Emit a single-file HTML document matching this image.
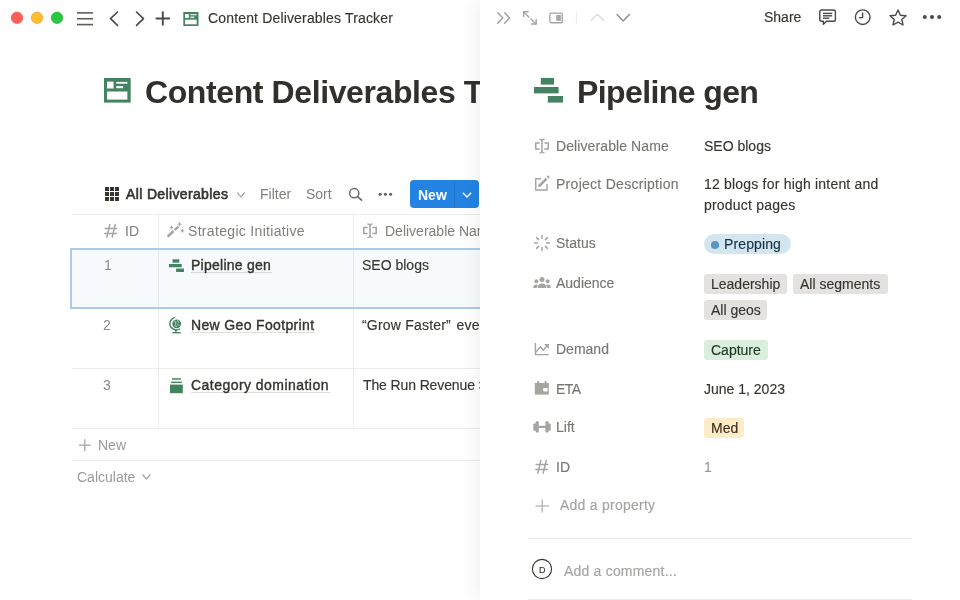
<!DOCTYPE html>
<html>
<head>
<meta charset="utf-8">
<style>
html,body{margin:0;padding:0;background:#fff;width:960px;height:600px;overflow:hidden;}
body{font-family:"Liberation Sans",sans-serif;color:#37352f;position:relative;}
.t{position:absolute;white-space:nowrap;font-size:14px;line-height:20px;will-change:transform;-webkit-text-stroke-width:0.15px;}
.g{color:#787773;}
.g2{color:#7f7e7a;-webkit-text-stroke-width:0;}
.abs{position:absolute;}
svg{position:absolute;overflow:visible;}
#left{position:absolute;left:0;top:0;width:960px;height:600px;overflow:hidden;}
#panel{position:absolute;left:480px;top:0;width:480px;height:600px;background:#fff;box-shadow:-5px 0 16px rgba(15,15,15,0.055);}
.hl{position:absolute;height:1px;background:#ececea;}
.vl{position:absolute;width:1px;background:#ececea;}
.b{font-weight:700;-webkit-text-stroke-width:0;}
.ul{}
.md{-webkit-text-stroke:0.4px #37352f;}
.uline{position:absolute;height:1px;background:rgba(55,53,47,0.16);}
.tag{position:absolute;height:19.5px;border-radius:3px;background:#e3e2e0;}
</style>
</head>
<body>
<div id="left">
  <!-- traffic lights -->
  <svg style="left:0;top:0" width="80" height="36">
    <circle cx="17" cy="17.8" r="5.75" fill="#ff5f57" stroke="#e2463f" stroke-width="0.6"/>
    <circle cx="37" cy="17.8" r="5.75" fill="#febc2e" stroke="#dea123" stroke-width="0.6"/>
    <circle cx="57" cy="17.8" r="5.75" fill="#28c840" stroke="#1aab29" stroke-width="0.6"/>
  </svg>
  <!-- hamburger -->
  <svg style="left:0;top:0" width="100" height="36">
    <g stroke="#5f5e5b" stroke-width="1.6" stroke-linecap="butt">
      <line x1="77" y1="12.9" x2="93" y2="12.9"/>
      <line x1="77" y1="18.75" x2="93" y2="18.75"/>
      <line x1="77" y1="24.6" x2="93" y2="24.6"/>
    </g>
  </svg>
  <!-- nav chevrons + plus -->
  <svg style="left:0;top:0" width="200" height="36">
    <g stroke="#4a4945" stroke-width="1.6" fill="none" stroke-linecap="round" stroke-linejoin="round">
      <polyline points="117.5,12 110.5,18.7 117.5,25.4"/>
      <polyline points="136.5,12 143.5,18.7 136.5,25.4"/>
      <line x1="162.8" y1="12.2" x2="162.8" y2="24.8" stroke-width="1.9"/>
      <line x1="156.4" y1="18.5" x2="169.2" y2="18.5" stroke-width="1.9"/>
    </g>
  </svg>
  <!-- small page icon -->
  <svg style="left:183px;top:12px" width="16" height="14" viewBox="0 0 27 24.6">
    <rect x="0" y="0" width="26.7" height="24.6" fill="#448361"/>
    <rect x="3" y="3.6" width="6.6" height="6.9" fill="#fff"/>
    <rect x="12.3" y="3.9" width="11.1" height="1.8" fill="#fff"/>
    <rect x="12.3" y="8.1" width="6.9" height="2.1" fill="#fff"/>
    <rect x="3" y="13.5" width="20.4" height="8.1" fill="#fff"/>
  </svg>
  <div class="t" style="left:207.5px;top:8.35px;letter-spacing:0.16px">Content Deliverables Tracker</div>

  <!-- page icon big -->
  <svg style="left:103.7px;top:78.3px" width="26.7" height="24.6" viewBox="0 0 26.7 24.6">
    <rect x="0" y="0" width="26.7" height="24.6" fill="#448361"/>
    <rect x="3" y="3.6" width="6.6" height="6.9" fill="#fff"/>
    <rect x="12.3" y="3.9" width="11.1" height="1.8" fill="#fff"/>
    <rect x="12.3" y="8.1" width="6.9" height="2.1" fill="#fff"/>
    <rect x="3" y="13.5" width="20.4" height="8.1" fill="#fff"/>
  </svg>
  <div class="t b" style="left:144.9px;top:71.6px;font-size:32px;line-height:40px;letter-spacing:-0.4px;color:#32302c">Content Deliverables Tracker</div>

  <!-- toolbar -->
  <svg style="left:0;top:0" width="130" height="210">
    <g fill="#37352f">
      <rect x="105" y="187" width="4" height="4"/><rect x="110" y="187" width="4" height="4"/><rect x="115" y="187" width="4" height="4"/>
      <rect x="105" y="192" width="4" height="4"/><rect x="110" y="192" width="4" height="4"/><rect x="115" y="192" width="4" height="4"/>
      <rect x="105" y="197" width="4" height="4"/><rect x="110" y="197" width="4" height="4"/><rect x="115" y="197" width="4" height="4"/>
    </g>
  </svg>
  <div class="t" style="left:126.3px;top:183.95px;letter-spacing:0.36px;-webkit-text-stroke:0.6px #37352f">All Deliverables</div>
  <svg style="left:0;top:0" width="480" height="220">
    <polyline points="237.3,192.5 241,196.8 244.8,192.5" fill="none" stroke="#a5a4a1" stroke-width="1.2"/>
    <circle cx="354.2" cy="193.2" r="4.6" fill="none" stroke="#6b6a66" stroke-width="1.5"/>
    <line x1="357.6" y1="196.6" x2="361.6" y2="200.2" stroke="#6b6a66" stroke-width="1.6" stroke-linecap="round"/>
    <circle cx="380.2" cy="194.3" r="1.5" fill="#5f5e5b"/>
    <circle cx="385.4" cy="194.3" r="1.5" fill="#5f5e5b"/>
    <circle cx="390.6" cy="194.3" r="1.5" fill="#5f5e5b"/>
  </svg>
  <div class="t g2" style="left:259.7px;top:184.15px">Filter</div>
  <div class="t g2" style="left:306.2px;top:184.15px">Sort</div>
  <div class="abs" style="left:410px;top:180.3px;width:69px;height:27.5px;background:#2383e2;border-radius:4px"></div>
  <div class="abs" style="left:454px;top:180.3px;width:1px;height:27.5px;background:rgba(0,0,0,0.08)"></div>
  <div class="t b" style="left:417.5px;top:184.9px;color:#fff">New</div>
  <svg style="left:0;top:0" width="480" height="220">
    <polyline points="462.8,192.7 467,197 471.2,192.7" fill="none" stroke="#fff" stroke-width="1.5"/>
  </svg>

  <!-- table -->
  <div class="hl" style="left:71.5px;top:214px;width:900px"></div>
  <div class="vl" style="left:158px;top:215px;height:214px"></div>
  <div class="vl" style="left:353px;top:215px;height:214px"></div>
  <!-- header -->
  <svg style="left:99px;top:219px" width="24" height="24"><path d="M10.8 5.6 L7.8 18.2 M16.2 5.6 L13.2 18.2 M6.2 9.4 H17.6 M5.8 14.4 H17.2" fill="none" stroke="#a5a4a1" stroke-width="1.5" stroke-linecap="round"/></svg>
  <div class="t g2" style="left:124.6px;top:220.75px">ID</div>
  <svg style="left:163px;top:218px" width="24" height="24">
    <g stroke="#a5a4a1" stroke-width="2.5"><line x1="4.6" y1="18.6" x2="10.6" y2="13"/><line x1="11.6" y1="12.1" x2="15.4" y2="8.6"/></g>
    <path d="M8.4 7.0 L8.950000000000001 8.85 L10.8 9.4 L8.950000000000001 9.950000000000001 L8.4 11.8 L7.8500000000000005 9.950000000000001 L6.0 9.4 L7.8500000000000005 8.85 Z M16.6 3.2 L17.25 5.55 L19.6 6.2 L17.25 6.8500000000000005 L16.6 9.2 L15.950000000000001 6.8500000000000005 L13.600000000000001 6.2 L15.950000000000001 5.55 Z M19.4 10.4 L20.15 12.05 L21.799999999999997 12.8 L20.15 13.55 L19.4 15.200000000000001 L18.65 13.55 L17.0 12.8 L18.65 12.05 Z" fill="#a5a4a1"/>
  </svg>
  <div class="t g2" style="left:188.4px;top:221px;letter-spacing:0.32px">Strategic Initiative</div>
  <svg style="left:358px;top:218px" width="24" height="24"><g fill="none" stroke="#a5a4a1" stroke-width="1.5"><path d="M9.6 9.6 H5.8 V15.6 H9.6 M14.4 9.6 H18.2 V15.6 H14.4 M12 7 V18.6"/><path d="M9.4 5.9 Q12 6.2 12 8 Q12 6.2 14.6 5.9 M9.4 19.7 Q12 19.4 12 17.6 Q12 19.4 14.6 19.7" stroke-width="1.2"/></g></svg>
  <div class="t g2" style="left:384.7px;top:221px">Deliverable Name</div>

  <!-- row 1 selected -->
  <div class="abs" style="left:69.8px;top:248px;width:420px;height:61px;background:#f7fafd;box-sizing:border-box;border:2px solid #abcbec;border-right:none"></div>
  <div class="vl" style="left:158px;top:250px;height:57px;background:#e3e8ee"></div>
  <div class="vl" style="left:353px;top:250px;height:57px;background:#e3e8ee"></div>
  <div class="t g2" style="left:104.1px;top:255.35px;color:#8c8b87">1</div>
  <svg style="left:168.8px;top:259.2px" width="15" height="13.3" viewBox="0 0 29.1 24.6">
    <rect x="6.8" y="0" width="13.2" height="6.6" fill="#448361"/>
    <rect x="0" y="9" width="24.6" height="6.4" fill="#448361"/>
    <rect x="13.8" y="18" width="15.3" height="6.6" fill="#448361"/>
  </svg>
  <div class="t md" style="left:190.8px;top:255.15px;letter-spacing:0.25px">Pipeline gen</div>
  <div class="uline" style="left:191px;top:272px;width:80.5px"></div>
  <div class="t" style="left:362px;top:255.05px">SEO blogs</div>

  <!-- row 2 -->
  <div class="hl" style="left:71.5px;top:367.6px;width:900px"></div>
  <div class="t g2" style="left:103.1px;top:315.45px;color:#8c8b87">2</div>
  <svg style="left:164px;top:314px" width="24" height="24" viewBox="0 0 24 24">
    <circle cx="12.7" cy="9.8" r="4.4" fill="#448361"/>
    <g fill="none" stroke="#cfe6d8" stroke-width="0.9" stroke-linecap="round">
      <path d="M10.4 7.2 L12 8.4 L11.6 10.2"/>
      <path d="M13.6 6.6 L14.4 8.2"/>
      <path d="M13.8 10.2 L15.2 11.6"/>
      <path d="M10.6 11.8 L12.8 12.4"/>
    </g>
    <g fill="none" stroke="#448361" stroke-width="1.4" stroke-linecap="round">
      <path d="M10.2 3.6 C5.6 5.4 4.4 11.6 8.2 14.4 C10.2 16 13.4 16.2 15.6 15"/>
      <line x1="11.9" y1="15.6" x2="11.9" y2="18.2"/>
      <line x1="8.4" y1="18.7" x2="16.6" y2="18.7" stroke-linecap="butt"/>
    </g>
  </svg>
  <div class="t md" style="left:190.8px;top:315.45px;letter-spacing:0.35px">New Geo Footprint</div>
  <div class="uline" style="left:191px;top:332px;width:124px"></div>
  <div class="t" style="left:362.2px;top:315.45px;letter-spacing:0.2px">“Grow Faster” <span style="margin-left:1.5px">events</span></div>

  <!-- row 3 -->
  <div class="t g2" style="left:103.1px;top:375.15px;color:#8c8b87">3</div>
  <svg style="left:164px;top:374px" width="24" height="24" viewBox="0 0 24 24">
    <rect x="8" y="4.2" width="8.8" height="1.5" fill="#448361"/>
    <rect x="7.2" y="7.6" width="10.6" height="1.5" fill="#448361"/>
    <rect x="6" y="10.6" width="12.8" height="8.6" fill="#448361"/>
  </svg>
  <div class="t md" style="left:190.8px;top:375.15px;letter-spacing:0.46px">Category domination</div>
  <div class="uline" style="left:191px;top:392px;width:138.5px"></div>
  <div class="t" style="left:362.5px;top:375.15px;letter-spacing:-0.12px">The Run Revenue Summit</div>

  <div class="hl" style="left:71.5px;top:428px;width:900px"></div>
  <svg style="left:0;top:0" width="200" height="500">
    <g stroke="#a5a4a1" stroke-width="1.3">
      <line x1="84.8" y1="439.3" x2="84.8" y2="451"/>
      <line x1="79" y1="445.2" x2="90.6" y2="445.2"/>
    </g>
    <polyline points="142.4,474.5 146.4,478.8 150.4,474.5" fill="none" stroke="#a5a4a1" stroke-width="1.2"/>
  </svg>
  <div class="t g2" style="left:97.6px;top:434.95px;color:#9b9a97">New</div>
  <div class="hl" style="left:71.5px;top:460px;width:900px"></div>
  <div class="t g2" style="left:76.9px;top:466.75px;color:#9b9a97">Calculate</div>
</div>

<div id="panel">
  <!-- header icons (coords relative to panel: subtract 480) -->
  <svg style="left:0;top:0" width="480" height="36">
    <g fill="none" stroke="#a5a4a1" stroke-width="1.5" stroke-linecap="round" stroke-linejoin="round">
      <polyline points="17.8,12.8 22.8,18 17.8,23.2"/>
      <polyline points="24.6,12.8 29.6,18 24.6,23.2"/>
    </g>
    <g fill="none" stroke="#a5a4a1" stroke-width="1.4" stroke-linecap="round" stroke-linejoin="round">
      <line x1="43.8" y1="12" x2="48.8" y2="17"/>
      <polyline points="43.6,16.4 43.6,11.8 48.2,11.8"/>
      <line x1="51" y1="19" x2="56" y2="24"/>
      <polyline points="56.2,19.4 56.2,24 51.6,24"/>
    </g>
    <rect x="69.9" y="13.15" width="12.35" height="9.6" rx="1.2" fill="none" stroke="#a5a4a1" stroke-width="1.3"/>
    <rect x="76.3" y="14.9" width="4.5" height="5.9" fill="#a5a4a1"/>
    <line x1="96.4" y1="11" x2="96.4" y2="24.3" stroke="#ebebea" stroke-width="1"/>
    <polyline points="111.2,20.6 117.4,14.2 123.6,20.6" fill="none" stroke="#dedddb" stroke-width="1.5" stroke-linecap="round" stroke-linejoin="round"/>
    <polyline points="137,14.6 143.2,21 149.4,14.6" fill="none" stroke="#8f8e8b" stroke-width="1.5" stroke-linecap="round" stroke-linejoin="round"/>
  </svg>
  <div class="t" style="left:284.2px;top:7.35px">Share</div>
  <svg style="left:0;top:0" width="480" height="36">
    <g fill="none" stroke="#4a4945" stroke-width="1.4" stroke-linejoin="round">
      <path d="M341.6 10 H353.6 Q355.4 10 355.4 11.8 V19.4 Q355.4 21.2 353.6 21.2 H346.6 L343.4 24.2 V21.2 H341.6 Q339.8 21.2 339.8 19.4 V11.8 Q339.8 10 341.6 10 Z"/>
      <line x1="343" y1="13.4" x2="352.2" y2="13.4"/>
      <line x1="343" y1="15.8" x2="352.2" y2="15.8"/>
      <line x1="343" y1="18.2" x2="349.4" y2="18.2"/>
      <circle cx="382.7" cy="17.2" r="7.3"/>
      <polyline points="382.6,12.6 382.6,17.6 378.8,17.6"/>
      <path d="M418 10 L420.4 15.2 L426 15.8 L421.8 19.6 L423 25 L418 22.2 L413 25 L414.2 19.6 L410 15.8 L415.6 15.2 Z"/>
    </g>
    <circle cx="444.8" cy="17" r="2" fill="#4a4945"/>
    <circle cx="452" cy="17" r="2" fill="#4a4945"/>
    <circle cx="459.2" cy="17" r="2" fill="#4a4945"/>
  </svg>

  <!-- title icon -->
  <svg style="left:54.3px;top:78.3px" width="29.1" height="24.6" viewBox="0 0 29.1 24.6">
    <rect x="6.8" y="0" width="13.2" height="6.6" fill="#448361"/>
    <rect x="0" y="9" width="24.6" height="6.4" fill="#448361"/>
    <rect x="13.8" y="18" width="15.3" height="6.6" fill="#448361"/>
  </svg>
  <div class="t b" style="left:96.8px;top:71.5px;font-size:32px;line-height:40px;letter-spacing:-0.6px;color:#32302c">Pipeline gen</div>

  <!-- property icons -->
  <svg style="left:0;top:0" width="480" height="600">
    <g fill="none" stroke="#a5a4a1" stroke-width="1.4">
      <path d="M61 178.75 H55.75 V190.05 H67.05 V184"/>
    </g>
    <g transform="translate(50,133.3)"><g fill="none" stroke="#a5a4a1" stroke-width="1.5"><path d="M9.6 9.6 H5.8 V15.6 H9.6 M14.4 9.6 H18.2 V15.6 H14.4 M12 7 V18.6"/><path d="M9.4 5.9 Q12 6.2 12 8 Q12 6.2 14.6 5.9 M9.4 19.7 Q12 19.4 12 17.6 Q12 19.4 14.6 19.7" stroke-width="1.2"/></g></g>
    <line x1="59.2" y1="186" x2="66.6" y2="178.6" stroke="#a5a4a1" stroke-width="2.6"/>
    <path d="M58.2 187 L58.9 184.3 L60.9 186.3 Z" fill="#a5a4a1"/>
    <line x1="67.5" y1="177.7" x2="69" y2="176.2" stroke="#a5a4a1" stroke-width="2.6"/>
    <!-- status spinner -->
    <g stroke="#a5a4a1" stroke-width="1.5" stroke-linecap="round">
      <line x1="62" y1="235.4" x2="62" y2="238.2"/>
      <line x1="62" y1="247.6" x2="62" y2="250.4"/>
      <line x1="54.4" y1="243" x2="57.2" y2="243"/>
      <line x1="66.8" y1="243" x2="69.6" y2="243"/>
      <line x1="56.6" y1="237.6" x2="58.6" y2="239.6"/>
      <line x1="65.4" y1="246.4" x2="67.4" y2="248.4"/>
      <line x1="56.6" y1="248.4" x2="58.6" y2="246.4"/>
      <line x1="65.4" y1="239.6" x2="67.4" y2="237.6"/>
    </g>
    <!-- audience -->
    <g fill="#a5a4a1">
      <circle cx="62" cy="279.6" r="2.5"/>
      <circle cx="56.4" cy="281.2" r="2"/>
      <circle cx="67.6" cy="281.2" r="2"/>
      <path d="M57.6 288 Q57.6 283.4 62 283.4 Q66.4 283.4 66.4 288 Z"/>
      <path d="M53.2 288 Q53.2 284.4 56.4 284.4 Q57.6 284.4 58.2 285 Q56.8 286.2 56.8 288 Z"/>
      <path d="M70.8 288 Q70.8 284.4 67.6 284.4 Q66.4 284.4 65.8 285 Q67.2 286.2 67.2 288 Z"/>
    </g>
    <!-- demand -->
    <g fill="none" stroke="#a5a4a1" stroke-width="1.4" stroke-linejoin="round">
      <polyline points="55.4,343 55.4,354.6 68.8,354.6"/>
      <polyline points="55.6,352.6 60.4,346.6 63.2,350.2 67.6,345.2"/>
    </g>
    <path d="M64 344 L68.9 344 L68.9 348.9 Z" fill="#a5a4a1"/>
    <!-- ETA calendar -->
    <rect x="54.8" y="383" width="14" height="11.6" fill="#a5a4a1"/>
    <rect x="57.3" y="381" width="1.8" height="3" fill="#a5a4a1"/>
    <rect x="64.7" y="381" width="1.8" height="3" fill="#a5a4a1"/>
    <rect x="63.2" y="388" width="4.4" height="3.4" rx="0.6" fill="#fff"/>
    <!-- lift dumbbell -->
    <g fill="#a5a4a1">
      <rect x="53.3" y="423.6" width="2.8" height="7.2" rx="1"/>
      <rect x="55.6" y="421.2" width="3.2" height="11.2" rx="1"/>
      <rect x="58.4" y="425.8" width="7.4" height="2.2"/>
      <rect x="65.4" y="421.2" width="3.2" height="11.2" rx="1"/>
      <rect x="67.9" y="423.6" width="2.8" height="7.2" rx="1"/>
    </g>
    <!-- ID hash -->
    <g transform="translate(50,455)"><path d="M10.8 5.6 L7.8 18.2 M16.2 5.6 L13.2 18.2 M6.2 9.4 H17.6 M5.8 14.4 H17.2" fill="none" stroke="#a5a4a1" stroke-width="1.5" stroke-linecap="round"/></g>
    <!-- add property plus -->
    <g stroke="#b4b3b0" stroke-width="1.3">
      <line x1="62.2" y1="499.5" x2="62.2" y2="512.5"/>
      <line x1="55.5" y1="506" x2="69" y2="506"/>
    </g>
    <!-- avatar -->
    <circle cx="62" cy="569" r="9.6" fill="#fff" stroke="#37352f" stroke-width="1.1"/>
  </svg>

  <div class="t g" style="left:76.2px;top:135.75px;letter-spacing:0.1px">Deliverable Name</div>
  <div class="t g" style="left:76.2px;top:173.85px;letter-spacing:0.28px">Project Description</div>
  <div class="t g" style="left:76.2px;top:233.05px">Status</div>
  <div class="t g" style="left:76.2px;top:273.05px">Audience</div>
  <div class="t g" style="left:76.2px;top:339.15px">Demand</div>
  <div class="t g" style="left:76.2px;top:378.9px;letter-spacing:-0.5px">ETA</div>
  <div class="t g" style="left:76.2px;top:416.85px">Lift</div>
  <div class="t g" style="left:76.2px;top:456.85px">ID</div>
  <div class="t" style="left:79.75px;top:495.15px;color:#a5a4a1;letter-spacing:0.25px">Add a property</div>

  <div class="t" style="left:224.3px;top:135.95px">SEO blogs</div>
  <div class="t" style="left:224.3px;top:173.9px;letter-spacing:0.2px">12 blogs for high intent and</div>
  <div class="t" style="left:224.3px;top:194.95px;letter-spacing:0.2px">product pages</div>

  <div class="abs" style="left:223.9px;top:234.3px;width:86.9px;height:19.4px;border-radius:10px;background:#d3e5ef"></div>
  <div class="abs" style="left:231.2px;top:241.4px;width:7.6px;height:7.6px;border-radius:50%;background:#5b97bd"></div>
  <div class="t" style="left:243.6px;top:234.05px;color:#183347;letter-spacing:0.12px">Prepping</div>

  <div class="tag" style="left:223.9px;top:274.3px;width:82.7px"></div>
  <div class="tag" style="left:313.1px;top:274.3px;width:94.6px"></div>
  <div class="tag" style="left:223.9px;top:300.1px;width:62.9px"></div>
  <div class="t" style="left:230.6px;top:274.05px">Leadership</div>
  <div class="t" style="left:320.2px;top:274.05px">All segments</div>
  <div class="t" style="left:230.6px;top:299.85px">All geos</div>

  <div class="tag" style="left:223.9px;top:340px;width:64px;background:#dbeddb"></div>
  <div class="t" style="left:230.6px;top:339.75px;color:#1c3829">Capture</div>

  <div class="t" style="left:224.3px;top:378.65px">June 1, 2023</div>

  <div class="tag" style="left:224px;top:418px;width:40.3px;background:#fdecc8"></div>
  <div class="t" style="left:230.5px;top:418.15px;color:#402c1b">Med</div>

  <div class="t g" style="left:224.3px;top:456.85px;color:#9b9a97">1</div>

  <div class="hl" style="left:48px;top:538px;width:384px"></div>
  <div class="t" style="left:58.9px;top:563.6px;font-size:9px;line-height:12px">D</div>
  <div class="t" style="left:84.3px;top:561.15px;color:#a5a4a1;letter-spacing:0.2px">Add a comment...</div>
  <div class="hl" style="left:48px;top:599px;width:384px"></div>
</div>
</body>
</html>
